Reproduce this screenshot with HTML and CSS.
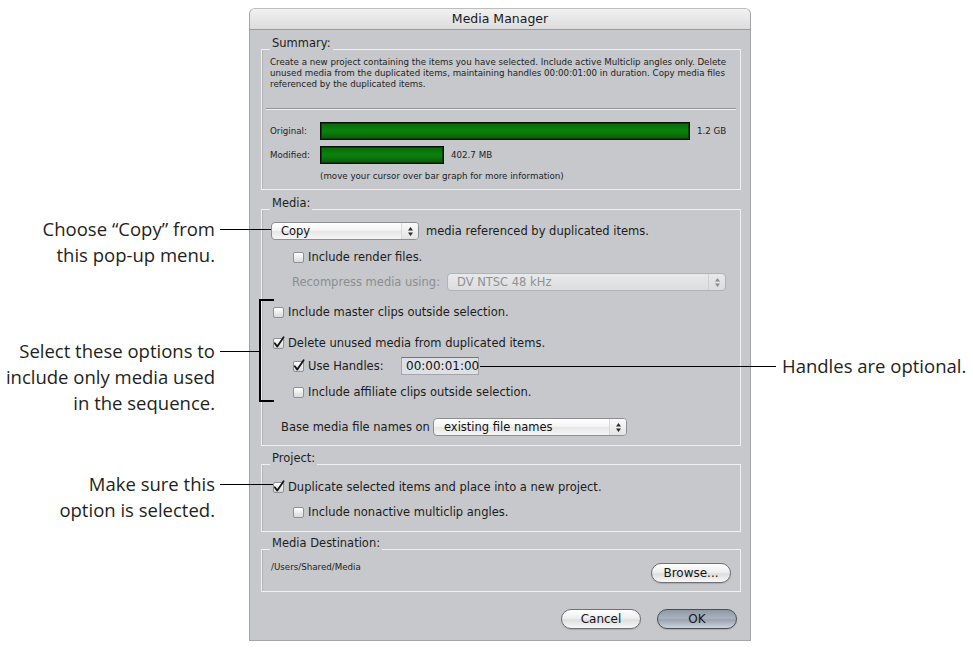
FILE: index.html
```html
<!DOCTYPE html>
<html lang="en">
<head>
<meta charset="utf-8">
<title>Media Manager</title>
<link rel="stylesheet" href="styles.css">
</head>
<body>
<div class="stage">
  <div class="dialog">
    <div class="titlebar">Media Manager</div>
    <div class="content">
      <fieldset class="group summary">
        <legend>Summary:</legend>
        <p class="summary-text">Create a new project containing the items you have selected. Include active Multiclip angles only. Delete<br>unused media from the duplicated items, maintaining handles 00:00:01:00 in duration. Copy media files<br>referenced by the duplicated items.</p>
        <div class="sep"></div>
        <div class="bar-row first">
          <span class="bar-label">Original:</span>
          <span class="bar" style="width:370px"></span>
          <span class="bar-value">1.2 GB</span>
        </div>
        <div class="bar-row second">
          <span class="bar-label">Modified:</span>
          <span class="bar" style="width:124px"></span>
          <span class="bar-value">402.7 MB</span>
        </div>
        <p class="hint">(move your cursor over bar graph for more information)</p>
      </fieldset>

      <fieldset class="group media">
        <legend>Media:</legend>
        <div class="row r-copy">
          <div class="popup p-copy"><span class="popup-text">Copy</span><span class="popup-arrows"><svg width="5" height="9" viewBox="0 0 5 9"><path d="M0 3.6 L2.5 0 L5 3.6Z M0 5.4 L2.5 9 L5 5.4Z" fill="#2a2a2a"/></svg></span></div>
          <span class="after-popup">media referenced by duplicated items.</span>
        </div>
        <div class="row check-row r-render indent2">
          <span class="cb"></span><span>Include render files.</span>
        </div>
        <div class="row r-recompress">
          <span class="dim-label">Recompress media using:</span>
          <div class="popup disabled p-recompress"><span class="popup-text">DV NTSC 48 kHz</span><span class="popup-arrows"><svg width="5" height="9" viewBox="0 0 5 9"><path d="M0 3.6 L2.5 0 L5 3.6Z M0 5.4 L2.5 9 L5 5.4Z" fill="#8a8c8f"/></svg></span></div>
        </div>
        <div class="row check-row r-master indent1">
          <span class="cb"></span><span>Include master clips outside selection.</span>
        </div>
        <div class="row check-row r-delete indent1">
          <span class="cb checked"><svg width="11" height="11" viewBox="0 0 11 11"><path d="M1.8 5.2 L4.3 8.6 L10.6 -0.8" fill="none" stroke="#151515" stroke-width="1.8" stroke-linecap="round" stroke-linejoin="round"/></svg></span><span>Delete unused media from duplicated items.</span>
        </div>
        <div class="row check-row r-handles indent2">
          <span class="cb checked"><svg width="11" height="11" viewBox="0 0 11 11"><path d="M1.8 5.2 L4.3 8.6 L10.6 -0.8" fill="none" stroke="#151515" stroke-width="1.8" stroke-linecap="round" stroke-linejoin="round"/></svg></span><span class="handles-label">Use Handles:</span>
          <span class="field">00:00:01:00</span>
        </div>
        <div class="row check-row r-affiliate indent2">
          <span class="cb"></span><span>Include affiliate clips outside selection.</span>
        </div>
        <div class="row r-base">
          <span class="base-label">Base media file names on</span>
          <div class="popup p-base"><span class="popup-text">existing file names</span><span class="popup-arrows"><svg width="5" height="9" viewBox="0 0 5 9"><path d="M0 3.6 L2.5 0 L5 3.6Z M0 5.4 L2.5 9 L5 5.4Z" fill="#2a2a2a"/></svg></span></div>
        </div>
      </fieldset>

      <fieldset class="group project">
        <legend>Project:</legend>
        <div class="row check-row r-dup indent1">
          <span class="cb checked"><svg width="11" height="11" viewBox="0 0 11 11"><path d="M1.8 5.2 L4.3 8.6 L10.6 -0.8" fill="none" stroke="#151515" stroke-width="1.8" stroke-linecap="round" stroke-linejoin="round"/></svg></span><span>Duplicate selected items and place into a new project.</span>
        </div>
        <div class="row check-row r-nonactive indent2">
          <span class="cb"></span><span>Include nonactive multiclip angles.</span>
        </div>
      </fieldset>

      <fieldset class="group dest">
        <legend>Media Destination:</legend>
        <div class="dest-row">
          <span class="path">/Users/Shared/Media</span>
          <button class="pill browse" type="button">Browse...</button>
        </div>
      </fieldset>

      <div class="actions">
        <button class="pill" type="button">Cancel</button>
        <button class="pill default" type="button">OK</button>
      </div>
    </div>
  </div>

  <div class="callout c-copy">
    <p class="callout-text">Choose “Copy” from<br>this pop-up menu.</p>
    <span class="leader l-copy"></span>
  </div>
  <div class="callout c-select">
    <p class="callout-text">Select these options to<br>include only media used<br>in the sequence.</p>
    <span class="leader l-select"></span>
  </div>
  <div class="bracket"></div>
  <div class="callout c-make">
    <p class="callout-text">Make sure this<br>option is selected.</p>
    <span class="leader l-make"></span>
  </div>
  <div class="callout c-handles">
    <span class="leader l-handles"></span>
    <p class="callout-text right">Handles are optional.</p>
  </div>
</div>
</body>
</html>
```

FILE: styles.css
```css
* { box-sizing: border-box; }

body {
  margin: 0;
  background: #ffffff;
  font-family: "DejaVu Sans", "Liberation Sans", sans-serif;
  color: #1c1c1c;
}

.stage {
  position: relative;
  width: 973px;
  height: 648px;
  padding-top: 8px;
  overflow: hidden;
}

/* ---------- dialog ---------- */
.dialog {
  margin-left: 249px;
  width: 502px;
  height: 633px;
  background: #c6c8cb;
  border: 1px solid #a4a6a9;
  border-top-color: #bdbdbd;
  border-radius: 6px 6px 0 0;
  display: flex;
  flex-direction: column;
}

.titlebar {
  height: 21px;
  line-height: 20px;
  text-align: center;
  font-size: 12.5px;
  color: #1a1a1a;
  background: linear-gradient(#f1f1f1, #dcdcdc);
  border-bottom: 1px solid #9a9a9a;
  border-radius: 5px 5px 0 0;
}

.content {
  padding: 0 9px 0 11px;
  display: flex;
  flex-direction: column;
}

/* ---------- group boxes ---------- */
.group {
  margin: 0;
  padding: 0 8px 8px 8px;
  border: 1px solid #eef0f1;
  box-shadow: inset 1px 0 0 #b3b5b8;
  min-width: 0;
}

.group legend {
  padding: 0 2px 12px;
  font-size: 11.5px;
  line-height: 14px;
  color: #1e1e1e;
}

.summary { margin-top: 6px; padding-bottom: 8px; }
.media { margin-top: 6px; padding-bottom: 9px; }
.project { margin-top: 5px; padding-bottom: 12px; }
.dest { margin-top: 4px; padding-bottom: 8px; }

/* summary */
.summary-text {
  margin: -5px 0 0;
  font-size: 8.7px;
  line-height: 11px;
  white-space: nowrap;
  color: #222;
}

.sep {
  margin: 18px -4px 0;
  height: 2px;
  border-top: 1px solid #929497;
  border-bottom: 1px solid #eff0f1;
}

.bar-row {
  display: flex;
  align-items: center;
  height: 18px;
  font-size: 8.7px;
  color: #222;
}
.bar-row.first { margin-top: 12px; }
.bar-row.second { margin-top: 6px; }

.bar-label { width: 50px; }

.bar {
  height: 18px;
  border: 1px solid #0c0c0c;
  background: linear-gradient(#0a640a, #0b820b 45%, #0b7c0b 60%, #075a07);
  box-shadow: inset 0 0 0 1px #0a3f0a;
}

.bar-value { margin-left: 7px; }

.hint {
  margin: 7px 0 0 50px;
  font-size: 8.7px;
  line-height: 10px;
  color: #222;
}

/* rows */
.row {
  display: flex;
  align-items: center;
  font-size: 11.5px;
  white-space: nowrap;
}

.check-row { height: 14px; }
.indent1 { padding-left: 3px; }
.indent2 { padding-left: 23px; }

.r-copy { height: 18px; padding-left: 1px; }
.r-render { margin-top: 10px; }
.r-recompress { margin-top: 9px; height: 18px; padding-left: 22px; }
.r-master { margin-top: 14px; }
.r-delete { margin-top: 17px; }
.r-handles { margin-top: 7px; height: 18px; }
.r-affiliate { margin-top: 10px; }
.r-base { margin-top: 19px; height: 18px; padding-left: 11px; }
.r-dup { margin-top: 3px; }
.r-nonactive { margin-top: 11px; }

.after-popup { margin-left: 7px; }
.dim-label { width: 155px; color: #8b8d90; }
.base-label { width: 152px; }
.handles-label { width: 93px; }

/* checkbox */
.cb {
  width: 11px;
  height: 11px;
  margin-right: 4px;
  flex: none;
  border: 1px solid #8e9093;
  border-radius: 2px;
  background: linear-gradient(#ffffff, #d9dadc);
  display: flex;
}
.cb svg {
  margin: -1px;
  overflow: visible;
  flex: none;
}

/* pop-up buttons */
.popup {
  display: flex;
  align-items: center;
  height: 18px;
  border: 1px solid #8c8e91;
  border-radius: 4px;
  background: linear-gradient(#ffffff, #f3f3f3 48%, #e6e6e6 52%, #f6f6f6);
  color: #111;
  font-size: 11.5px;
  flex: none;
}
.popup-text { flex: 1; padding-left: 9px; }
.popup-arrows {
  width: 17px;
  height: 100%;
  display: flex;
  align-items: center;
  justify-content: center;
  border-left: 1px solid #d8d9db;
  border-radius: 0 3px 3px 0;
  background: linear-gradient(#fafafa, #e4e4e4);
}
.p-copy { width: 148px; }
.p-recompress { width: 279px; }
.p-base { width: 194px; }
.p-base .popup-text { padding-left: 10px; }

.popup.disabled {
  border-color: #b1b3b6;
  background: linear-gradient(#e8e9ea, #dcdddf);
  color: #8e9093;
}
.popup.disabled .popup-arrows {
  border-left-color: #cfd0d2;
  background: none;
}

/* text field */
.field {
  width: 78px;
  height: 18px;
  line-height: 16px;
  padding-left: 4px;
  font-size: 12px;
  color: #111;
  background: #dde0e5;
  border: 1px solid #a3a5a8;
  border-top-color: #727477;
}

/* destination */
.dest-row {
  display: flex;
  justify-content: space-between;
  align-items: flex-start;
}
.path {
  font-size: 8.7px;
  line-height: 10px;
  padding-left: 1px;
  color: #222;
}

/* aqua pill buttons */
.pill {
  width: 80px;
  height: 20px;
  padding: 0;
  border: 1px solid #6e7073;
  border-radius: 10px;
  background: linear-gradient(#ffffff, #efefef 45%, #dedede 55%, #f8f8f8);
  font-family: "DejaVu Sans", "Liberation Sans", sans-serif;
  font-size: 12px;
  color: #151515;
  line-height: 18px;
  box-shadow: 0 1px 1px rgba(0, 0, 0, 0.15);
}
.browse { margin-top: 1px; margin-right: 1px; }

.actions {
  margin-top: 17px;
  margin-right: 4px;
  display: flex;
  justify-content: flex-end;
  gap: 16px;
}
.pill.default {
  border-color: #4a4f55;
  background: linear-gradient(#8e98a4, #a9b2bd 45%, #9aa4b0 55%, #cdd4dc);
}

/* ---------- callouts ---------- */
.callout {
  position: absolute;
  display: flex;
  align-items: flex-start;
}

.callout-text {
  margin: 0;
  width: 215px;
  text-align: right;
  font-family: "Open Sans", "Noto Sans", sans-serif;
  font-size: 18.5px;
  line-height: 26px;
  color: #231f20;
  white-space: nowrap;
}
.callout-text.right {
  width: auto;
  text-align: left;
  margin-left: 6px;
}

.leader {
  height: 1px;
  margin-top: 13px;
  margin-left: 5px;
  background: #000;
  flex: none;
}

.c-copy { left: 0; top: 216px; }
.l-copy { width: 51px; }

.c-select { left: 0; top: 338px; }
.l-select { width: 40px; }

.c-make { left: 0; top: 471px; }
.l-make { width: 53px; }

.c-handles { left: 480px; top: 353px; }
.l-handles { width: 296px; margin-left: 0; }

.bracket {
  position: absolute;
  left: 259px;
  top: 299px;
  width: 15px;
  height: 103px;
  border: 2px solid #000;
  border-right: none;
}
```
